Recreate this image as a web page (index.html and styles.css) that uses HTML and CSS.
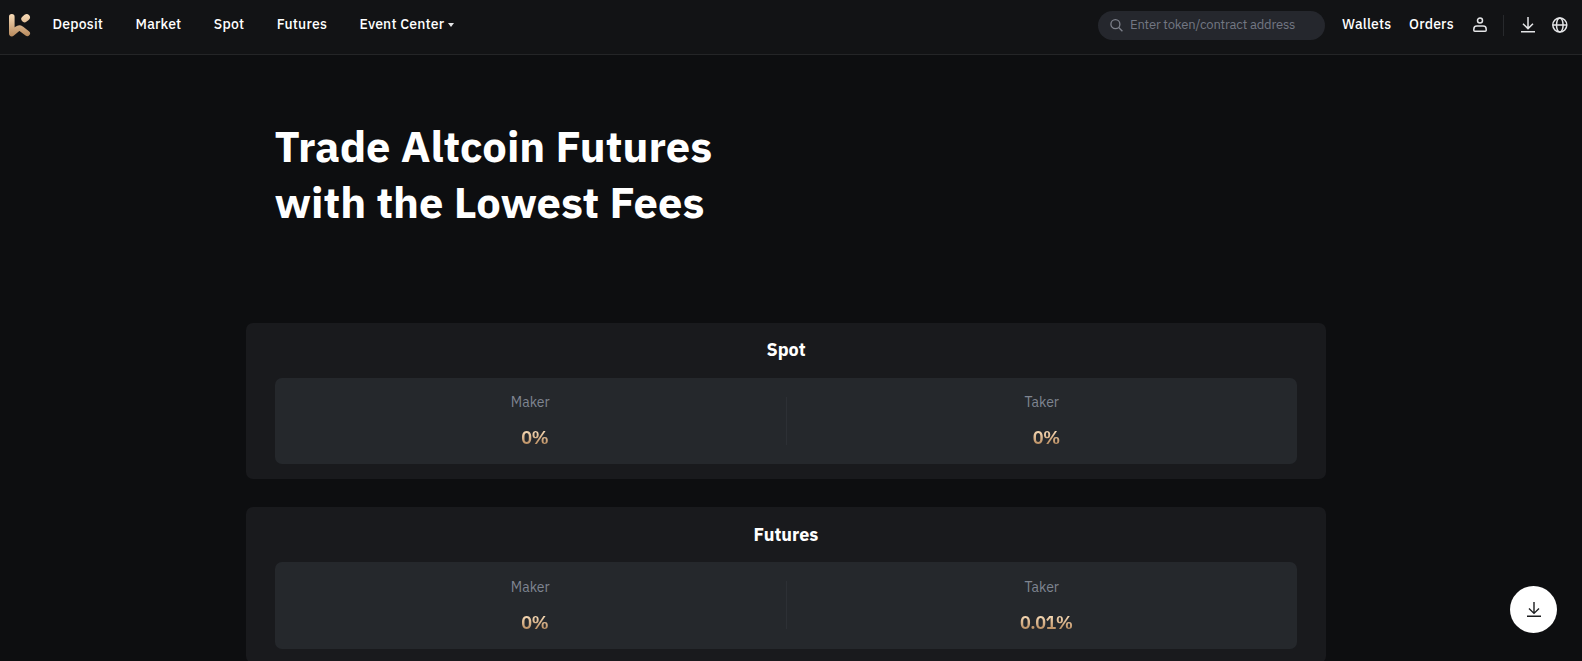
FILE: index.html
```html
<!DOCTYPE html>
<html lang="en">
<head>
    <meta charset="UTF-8">
    <meta name="viewport" content="width=device-width, initial-scale=1.0">
    <title>Trading Fees</title>
    <link rel="stylesheet" href="styles.css">
</head>
<body>
    <header class="header">
        <a class="logo" href="#">
            <svg width="23" height="25" viewBox="0 0 23 25">
                <defs>
                    <linearGradient id="gold" gradientUnits="userSpaceOnUse" x1="0" y1="1" x2="0" y2="24">
                        <stop offset="0" stop-color="#f9dcb8"/>
                        <stop offset="1" stop-color="#b5875a"/>
                    </linearGradient>
                </defs>
                <g fill="none" stroke="url(#gold)" stroke-linecap="round" stroke-linejoin="round">
                    <path stroke-width="5.6" d="M3.8 3.8V20.6L9.2 16Q11.2 14.4 13.2 15.8L19.2 20.4"/>
                    <path stroke-width="6.6" d="M16.6 6L18.6 4.4"/>
                </g>
            </svg>
        </a>
        <nav class="nav">
            <a href="#">Deposit</a>
            <a href="#">Market</a>
            <a href="#">Spot</a>
            <a href="#">Futures</a>
            <a class="nav-event" href="#">Event Center</a>
            <span class="caret"></span>
        </nav>
        <div class="search">
            <svg width="14" height="14" viewBox="0 0 14 14" fill="none" stroke="#7d818b" stroke-width="1.3">
                <circle cx="5.4" cy="5.2" r="4.5"/>
                <path d="M8.7 8.5L12.4 12.2"/>
            </svg>
            <span class="search-text">Enter token/contract address</span>
        </div>
        <a class="link link-wallets" href="#">Wallets</a>
        <a class="link link-orders" href="#">Orders</a>
        <svg class="icon-user" width="16" height="17" viewBox="0 0 16 17" fill="none" stroke="#e4e5e7" stroke-width="1.5">
            <circle cx="8" cy="3.6" r="2.5"/>
            <path d="M4.8 9.1H11.2Q14.2 9.1 14.2 12.3V13.3Q14.2 14.3 13.2 14.3H2.8Q1.8 14.3 1.8 13.3V12.3Q1.8 9.1 4.8 9.1Z"/>
        </svg>
        <span class="divider"></span>
        <svg class="icon-download" width="16" height="17" viewBox="0 0 16 17" fill="none" stroke="#e4e5e7" stroke-width="1.5">
            <path d="M8 0V11.4M3 6.8L8 11.6L13 6.8M1 14.7H15"/>
        </svg>
        <svg class="icon-globe" width="17" height="17" viewBox="0 0 17 17" fill="none" stroke="#e4e5e7" stroke-width="1.5">
            <circle cx="8.8" cy="8" r="7"/>
            <ellipse cx="8.8" cy="8" rx="3.3" ry="7"/>
            <path d="M1.8 8H15.8"/>
        </svg>
    </header>
    <main class="container">
        <h1 class="title">Trade Altcoin Futures<br>with the Lowest Fees</h1>
        <section class="card">
            <h2>Spot</h2>
            <div class="fees">
                <div class="fee">
                    <p class="label">Maker</p>
                    <p class="value"><span>0%</span></p>
                </div>
                <div class="line"></div>
                <div class="fee">
                    <p class="label">Taker</p>
                    <p class="value"><span>0%</span></p>
                </div>
            </div>
        </section>
        <section class="card card-futures">
            <h2>Futures</h2>
            <div class="fees">
                <div class="fee">
                    <p class="label">Maker</p>
                    <p class="value"><span>0%</span></p>
                </div>
                <div class="line"></div>
                <div class="fee">
                    <p class="label">Taker</p>
                    <p class="value"><span>0.01%</span></p>
                </div>
            </div>
        </section>
    </main>
    <a class="float-download" href="#">
        <svg width="16" height="17" viewBox="0 0 16 17" fill="none" stroke="#1c1d1f" stroke-width="1.4">
            <path d="M8 1V12M3 7.6L8 12.4L13 7.6M1 15.3H15"/>
        </svg>
    </a>
</body>
</html>
```
FILE: styles.css
```css
* {
    box-sizing: border-box;
}
body {
    margin: 0;
    height: 661px;
    overflow: hidden;
    background-color: #0d0e10;
    color: #fff;
    font-family: "IBM Plex Sans", Roboto, sans-serif;
}
a {
    color: inherit;
    text-decoration: none;
}
h1, h2, p {
    margin: 0;
}
svg {
    display: block;
    flex: none;
}
.header {
    display: flex;
    align-items: center;
    height: 55px;
    padding: 0 14px 3px 8px;
    background-color: #121315;
    border-bottom: 1px solid #242527;
    font-size: 14px;
    font-weight: 500;
    letter-spacing: 0.2px;
    white-space: nowrap;
}
.logo {
    width: 44.5px;
}
.nav {
    display: flex;
    align-items: center;
    padding-bottom: 3px;
}
.nav a {
    margin-right: 32.4px;
}
.nav .nav-event {
    margin-right: 4px;
}
.caret {
    margin-top: 1px;
    border: 3.5px solid transparent;
    border-top: 4px solid #e4e5e7;
    border-bottom: 0;
}
.search {
    display: flex;
    align-items: center;
    width: 227px;
    height: 29px;
    margin-left: auto;
    margin-right: 17px;
    padding-left: 12px;
    border-radius: 15px;
    background-color: #25272d;
    color: #737783;
    font-size: 13px;
    font-weight: 400;
    letter-spacing: -0.18px;
}
.search-text {
    margin-left: 6px;
    padding-bottom: 2px;
}
.link {
    padding-bottom: 3px;
}
.link-wallets {
    width: 67px;
}
.link-orders {
    width: 63px;
}
.divider {
    width: 1px;
    height: 21px;
    margin: 0 16px 0 15px;
    background-color: #27292c;
}
.icon-globe {
    margin-left: 15px;
}
.container {
    width: 1080px;
    margin-left: 246px;
}
.title {
    height: 268px;
    padding: 63px 0 0 28.5px;
    font-size: 43.5px;
    font-weight: 700;
    line-height: 56px;
}
.card {
    height: 156px;
    margin-bottom: 28px;
    padding: 0 29px;
    border-radius: 7px;
    background-color: #191a1d;
}
.card h2 {
    height: 55px;
    font-size: 18px;
    font-weight: 700;
    line-height: 54px;
    text-align: center;
}
.fees {
    display: flex;
    height: 86px;
    border-radius: 7px;
    background-color: #25282c;
}
.fee {
    flex: 1;
    padding-top: 15px;
    text-align: center;
}
.line {
    width: 1px;
    height: 48px;
    margin-top: 19px;
    background-color: #2d3035;
}
.label {
    color: #7f8591;
    font-size: 14px;
    line-height: 18px;
}
.value {
    padding: 15px 0 0 9px;
    font-size: 18px;
    font-weight: 600;
    line-height: 24px;
    letter-spacing: -0.5px;
}
.value span {
    background: linear-gradient(to bottom, #f9dcb8 20%, #b5875a 85%);
    -webkit-background-clip: text;
    background-clip: text;
    color: transparent;
}
.card-futures h2 {
    line-height: 56px;
}
.card-futures .fees {
    height: 87px;
}
.card-futures .fee {
    padding-top: 16px;
}
.float-download {
    position: fixed;
    right: 25px;
    bottom: 28px;
    display: flex;
    align-items: center;
    justify-content: center;
    width: 47px;
    height: 47px;
    border-radius: 50%;
    background-color: #fff;
}
```
